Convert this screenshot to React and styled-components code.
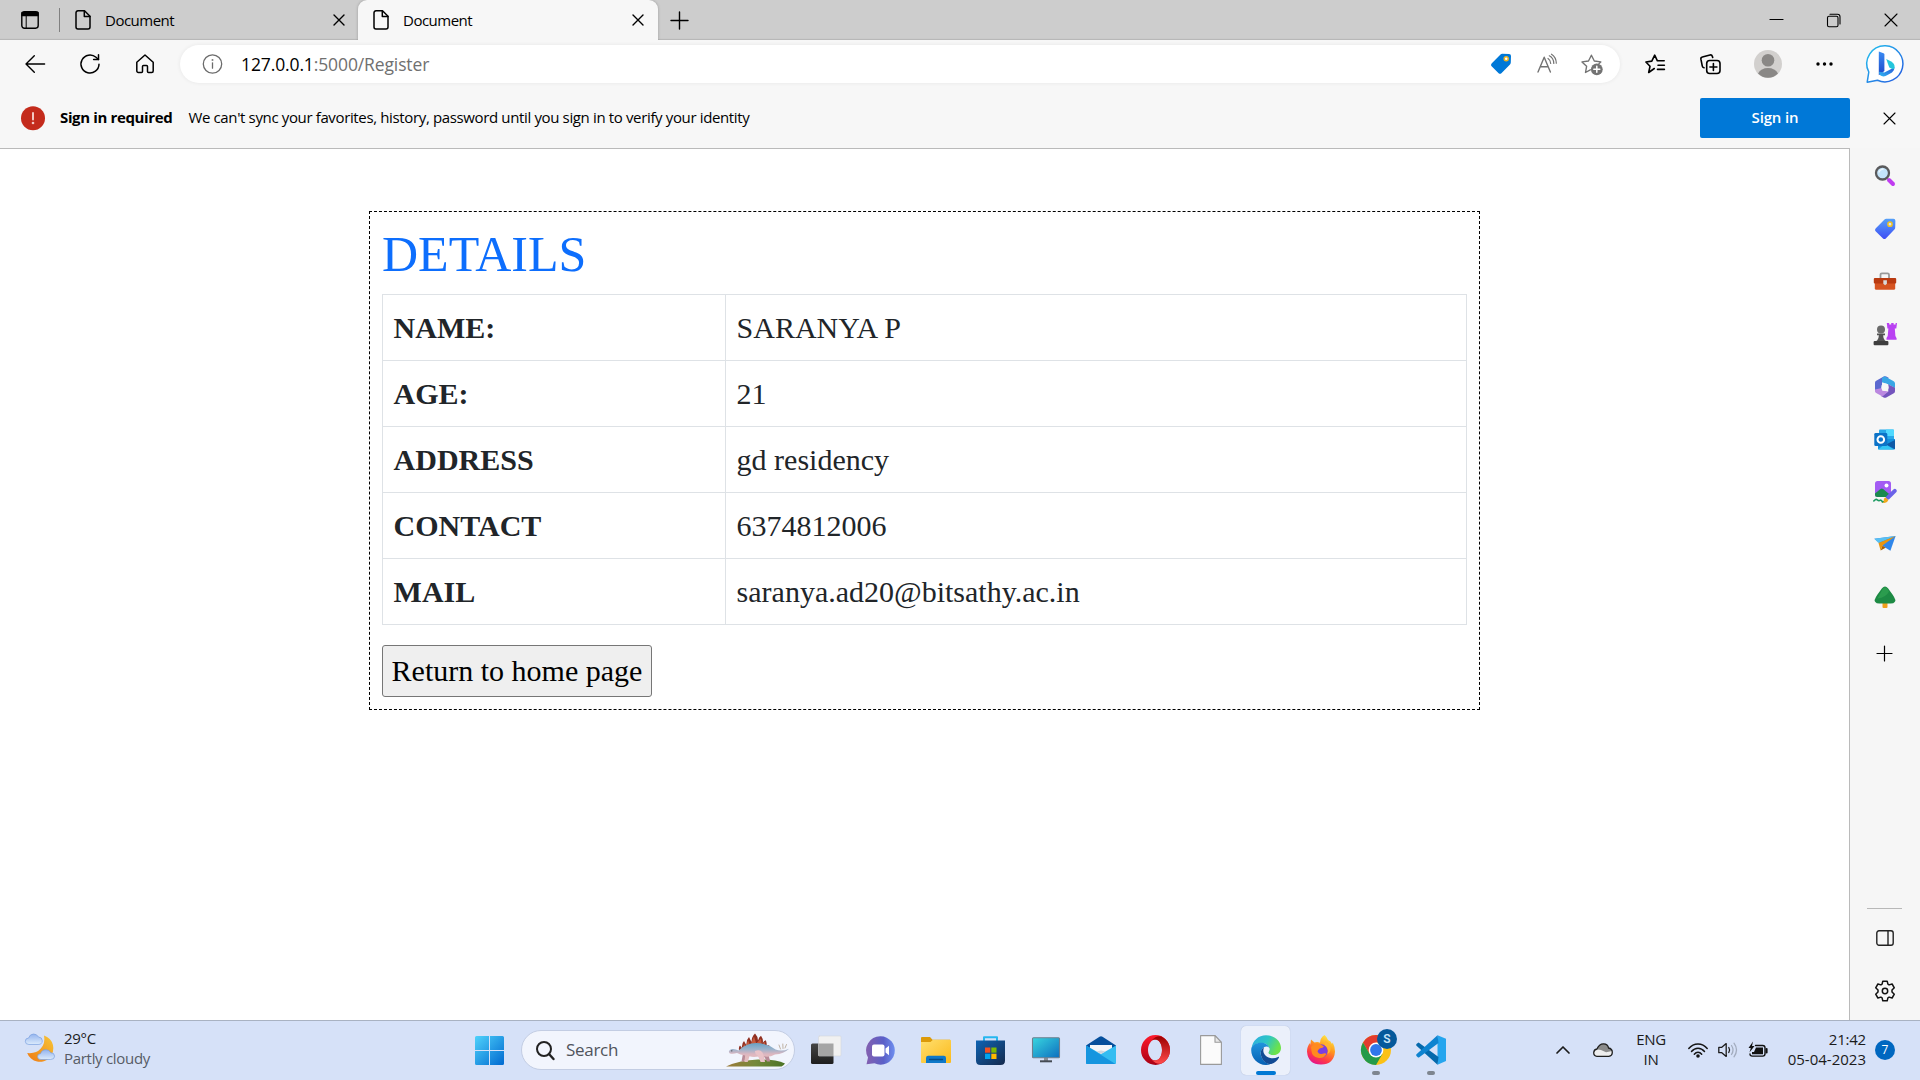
import React from "react";
import styled, { createGlobalStyle, css } from "styled-components";

const ui = `"Segoe UI", "Open Sans", "Noto Sans", sans-serif`;
const serif = `"Times New Roman", "Liberation Serif", serif`;

const GlobalStyle = createGlobalStyle`
  *, *::before, *::after { box-sizing: border-box; }
  html, body { margin: 0; padding: 0; }
  body { background: #fff; overflow: hidden; }
`;

/* ---------- window ---------- */
const Window = styled.div`
  width: 1920px;
  height: 1080px;
  display: flex;
  flex-direction: column;
  overflow: hidden;
  background: #f7f7f7;
  font-family: ${ui};
  color: #000;
`;

const Label = styled.span`
  font-size: ${(p) => p.$size || 15}px;
  font-weight: ${(p) => p.$weight || 400};
  letter-spacing: ${(p) => p.$track || 0}px;
  color: ${(p) => p.$color || "#000"};
  line-height: 20px;
  white-space: nowrap;
`;

const Slot = styled.span`
  display: flex;
  align-items: center;
  justify-content: ${(p) => p.$justify || "center"};
  flex: none;
  width: ${(p) => p.$w}px;
  height: ${(p) => p.$h || 40}px;
`;

const Drawing = styled.svg`
  display: block;
  flex: none;
  overflow: visible;
`;

function Icon({ w = 20, h = 20, stroke = "#000", sw = 1.4, children }) {
  return (
    <Drawing
      width={w}
      height={h}
      viewBox={`0 0 ${w} ${h}`}
      fill="none"
      stroke={stroke}
      strokeWidth={sw}
      strokeLinecap="round"
      strokeLinejoin="round"
    >
      {children}
    </Drawing>
  );
}

/* ---------- tab strip ---------- */
const TabStrip = styled.header`
  display: flex;
  align-items: stretch;
  height: 40px;
  background: #cdcdcd;
  box-shadow: inset 0 -2px 1px -1px #b6b6b6;
`;

const TabActions = styled.div`
  display: flex;
  align-items: center;
  width: 60px;
  padding-left: 21px;
  gap: 20px;
`;

const Divider = styled.span`
  width: 1px;
  height: 24px;
  background: #808080;
`;

const Tab = styled.div`
  display: flex;
  align-items: center;
  width: ${(p) => p.$w}px;
  padding: 0 ${(p) => p.$right}px 0 15px;
  ${(p) =>
    p.$active &&
    css`
      background: #f7f7f7;
      border-radius: 9px 9px 0 0;
      box-shadow: 0 0 3px rgba(0, 0, 0, 0.25);
      clip-path: inset(0 -4px 0 -4px);
    `}
`;

const TabTitle = styled(Label)`
  flex: 1;
  margin-left: 14px;
  padding-bottom: 1px;
`;

const WindowControls = styled.div`
  display: flex;
  align-items: center;
  margin-left: auto;
`;

/* ---------- toolbar ---------- */
const Toolbar = styled.nav`
  display: flex;
  align-items: center;
  height: 48px;
  padding-left: 7px;
`;

const AddressBar = styled.div`
  display: flex;
  align-items: center;
  width: 1440px;
  height: 38px;
  margin: 0 6px 0 8px;
  padding: 0 6px 0 22px;
  border-radius: 19px;
  background: #fff;
  box-shadow: 0 0 4px rgba(0, 0, 0, 0.07);
`;

const Url = styled.div`
  flex: 1;
  margin-left: 19px;
  padding-bottom: 1px;
  display: flex;
`;

/* ---------- sign in banner ---------- */
const Banner = styled.section`
  display: flex;
  align-items: center;
  height: 60px;
  padding-left: 20px;
`;

const BannerText = styled.div`
  display: flex;
  flex: 1;
  gap: 16px;
  margin-left: 15px;
  padding-bottom: 2px;
`;

const SignIn = styled.button`
  width: 150px;
  height: 40px;
  margin-right: 5px;
  padding: 0 0 2px;
  border: 0;
  border-radius: 2px;
  background: #0078d7;
  color: #fff;
  font: 600 15px ${ui};
  letter-spacing: -0.15px;
`;

const Dismiss = styled.span`
  display: flex;
  width: 65px;
  padding-left: 29px;
`;

/* ---------- page ---------- */
const Body = styled.main`
  display: flex;
  height: 872px;
`;

const Page = styled.div`
  width: 1850px;
  border-top: 1px solid #bababa;
  border-right: 1px solid #bababa;
  background: #fff;
  font-family: ${serif};
  color: #212529;
`;

const Panel = styled.section`
  width: 1111px;
  margin: 62px auto 0;
  padding: 12px;
  border: 1px dashed #000;
`;

const Title = styled.h1`
  margin: 0 0 10px;
  font-size: 50px;
  font-weight: 400;
  line-height: 60px;
  color: #0d6efd;
`;

const Table = styled.table`
  width: 100%;
  margin-bottom: 20px;
  border-collapse: collapse;
  table-layout: fixed;
  font-size: 30px;
  line-height: 45px;
  text-align: left;

  th,
  td {
    padding: 10px 10px 10px 10.6px;
    border: 1px solid #dee2e6;
  }
  th {
    width: 343px;
  }
`;

const HomeButton = styled.button`
  display: block;
  width: 270px;
  height: 52px;
  padding: 0;
  border: 1px solid #767676;
  border-radius: 3px;
  background: #efefef;
  color: #000;
  font: 30px ${serif};
  white-space: nowrap;
`;

const Sidebar = styled.aside`
  display: flex;
  flex-direction: column;
  align-items: center;
  width: 70px;
  padding: 2px 1px 3px 0;
  background: #f6f6f6;
`;

const SideItem = styled.span`
  display: flex;
  align-items: center;
  justify-content: center;
  height: ${(p) => p.$h || 52.6}px;
`;

const SideRule = styled.span`
  width: 35px;
  height: 1px;
  margin-top: auto;
  margin-bottom: 3px;
  background: #b8b8b8;
`;

/* ---------- taskbar ---------- */
const Taskbar = styled.footer`
  display: flex;
  align-items: center;
  height: 60px;
  padding-bottom: 1px;
  border-top: 1px solid #a9b2c2;
  background: #d6e1f8;
`;

const Weather = styled.div`
  display: flex;
  align-items: center;
  width: 462px;
  margin-top: -4px;
  padding-left: 25px;
  gap: 9px;
`;

const Lines = styled.div`
  display: flex;
  flex-direction: column;
  align-items: ${(p) => p.$align || "flex-start"};
  margin-top: ${(p) => p.$top || 0}px;
`;

const SearchBox = styled.div`
  display: flex;
  align-items: center;
  width: 274px;
  height: 40px;
  margin: 0 3px 0 4px;
  padding: 0 4px 0 14px;
  border: 1px solid #c3cde3;
  border-radius: 20px;
  background: #f2f5fd;
`;

const SearchLabel = styled(Label)`
  flex: 1;
  margin-left: 12px;
`;

const AppTile = styled.div`
  position: relative;
  display: flex;
  align-items: center;
  justify-content: center;
  width: 49px;
  height: 49px;
  margin: 0 3px;
  border-radius: 5px;
  ${(p) =>
    p.$active &&
    css`
      background: #ebf0fb;
      box-shadow: 0 0 1px #9fabc5;
    `}
  ${(p) =>
    p.$run &&
    css`
      &::after {
        content: "";
        position: absolute;
        bottom: 0;
        width: ${p.$active ? 20 : 8}px;
        height: 4px;
        border-radius: 2px;
        background: ${p.$active ? "#0078d4" : "#7e858f"};
      }
    `}
`;

const AccountBadge = styled.span`
  position: absolute;
  left: 26px;
  top: 3px;
  width: 20px;
  height: 20px;
  border-radius: 50%;
  background: #05599b;
  color: #c7e3f8;
  font: 600 12px/20px "Roboto", sans-serif;
  text-align: center;
`;

const Tray = styled.div`
  display: flex;
  align-items: center;
  margin-left: auto;
  padding-right: 25px;
`;

const Count = styled.span`
  width: 20px;
  height: 20px;
  margin-left: 9px;
  border-radius: 50%;
  background: #0067c0;
  color: #fff;
  font-size: 12px;
  line-height: 19px;
  text-align: center;
`;

/* ---------- line icons ---------- */
const Cross = ({ s = 10, c = "#000", sw = 1.4 }) => (
  <Icon w={s} h={s} stroke={c} sw={sw}>
    <path d={`M0 0L${s} ${s}M${s} 0L0 ${s}`} />
  </Icon>
);

const Plus = ({ s = 16, sw = 1.4 }) => (
  <Icon w={s} h={s} sw={sw}>
    <path d={`M${s / 2} 0V${s}M0 ${s / 2}H${s}`} />
  </Icon>
);

const PageGlyph = () => (
  <Icon w={16} h={20} sw={1.5}>
    <path d="M3 .8H9.5L15 6.2V17a2 2 0 0 1-2 2H3a2 2 0 0 1-2-2V2.8a2 2 0 0 1 2-2z" />
    <path d="M9.3 1V6.4H15" />
  </Icon>
);

const Workspaces = () => (
  <Icon w={18} h={18} sw={1.4}>
    <rect x=".8" y=".8" width="16.4" height="16.4" rx="2.6" />
    <path d="M1 1.5h16V4.600H1z" fill="#000" />
    <path d="M5.2 5v12" strokeWidth="1" />
  </Icon>
);

const Back = () => (
  <Icon w={20} h={18} sw={1.4}>
    <path d="M9.3 .8L1 9l8.3 8.2M1 9h18.600" />
  </Icon>
);

const Reload = () => (
  <Icon sw={1.5}>
    <path d="M19 10.2A9 9 0 1 1 16 3.300L18.500 5.500" />
    <path d="M18.500 .8V5.500H13.600" />
  </Icon>
);

const Home = () => (
  <Icon sw={1.5}>
    <path d="M1.8 8.3L10 1l8.2 7.300V17a1.500 1.500 0 0 1-1.500 1.500H13.500a1 1 0 0 1-1-1V12.500a1 1 0 0 0-1-1h-3a1 1 0 0 0-1 1v5a1 1 0 0 1-1 1H3.300A1.500 1.500 0 0 1 1.800 17z" />
  </Icon>
);

const Info = () => (
  <Icon stroke="#6b6b6b" sw={1.3}>
    <circle cx="10.500" cy="10" r="9.200" />
    <path d="M10.500 8.800v5.400" />
    <circle cx="10.500" cy="6" r=".3" />
  </Icon>
);

const Tag = () => (
  <Icon w={22} h={22} stroke="none">
    <path d="M10.500 1.500Q11.200.8 12.200.8L19 .9q2 .1 2 2l-.2 6.700q0 1-.8 1.800l-8.600 8.800q-1.400 1.300-2.800 0l-7-7q-1.300-1.400 0-2.800z" fill="#0078d7" />
    <circle cx="16.200" cy="5.800" r="2" fill="#fff" stroke="#eeb422" strokeWidth="1.500" />
  </Icon>
);

const ReadAloud = () => (
  <Icon w={20} h={20} stroke="#737373" sw={1.4}>
    <path d="M1 18L7.200 3.200 13.400 18M3.300 12.800h7.900" />
    <path d="M11 4.500q2.600 1.600 2.700 5M12.300 1.800q4.300 2 4.500 7.700M14.500 .2q4.600 2.800 4.800 9" strokeWidth="1.200" />
  </Icon>
);

const AddFavorite = () => (
  <Icon w={22} h={21} stroke="#737373" sw={1.4}>
    <path d="M9.300 15.800l-4.800 2.700 1.100-6.200L1 7.900l6.500-.9 2.900-5.800 2.900 5.800 6.500.9-1.800 1.700" />
    <circle cx="15.800" cy="15.300" r="5.900" fill="#737373" stroke="none" />
    <path d="M15.800 12.300v6M12.800 15.300h6" stroke="#fff" strokeWidth="1.500" />
  </Icon>
);

const Favorites = () => (
  <Icon w={20} h={20} sw={1.6}>
    <path d="M9.300 14.500l-5.600 4L5 12.300 .9 8l5.900-.9L9.700 1.200l2.700 5.600h6.800M13 11.200h6.400M12.500 15.400h6.900" />
  </Icon>
);

const Collections = () => (
  <Icon w={21} h={21} sw={1.6}>
    <path d="M4 13.800q-1.400-.3-1.700-1.700L.9 5.200Q.6 3.400 2.300 3L10 1q1.800-.4 2.400 1.500l.3 1" />
    <rect x="6.700" y="6.500" width="13.300" height="13" rx="3" />
    <path d="M13.400 9.500v7M9.900 13h7" />
  </Icon>
);

const Avatar = () => (
  <Icon w={28} h={28} stroke="none">
    <circle cx="14" cy="14" r="14" fill="#d2d0ce" />
    <circle cx="14" cy="10.200" r="6.300" fill="#8a8886" />
    <path d="M4 23.500q3-5.500 10-5.500t10 5.500A14 14 0 0 1 4 23.500z" fill="#8a8886" />
  </Icon>
);

const Dots = () => (
  <Icon w={17} h={4} stroke="none">
    <circle cx="2" cy="2" r="1.700" fill="#000" />
    <circle cx="8.500" cy="2" r="1.700" fill="#000" />
    <circle cx="15" cy="2" r="1.700" fill="#000" />
  </Icon>
);

const Bing = () => (
  <Icon w={38} h={38} stroke="none">
    <defs>
      <linearGradient id="bo" x1="0" y1="0" x2="1" y2="1">
        <stop offset="0" stopColor="#25c3ee" />
        <stop offset="1" stopColor="#2457e0" />
      </linearGradient>
      <linearGradient id="bs" x1="0" y1="0" x2="0" y2="1">
        <stop offset="0" stopColor="#3a8cf4" />
        <stop offset="1" stopColor="#1c48c8" />
      </linearGradient>
      <linearGradient id="bb" x1="0" y1="1" x2="1" y2="0">
        <stop offset="0" stopColor="#2fb8f2" />
        <stop offset="1" stopColor="#2a55d8" />
      </linearGradient>
    </defs>
    <path d="M19.500 .8A18 18 0 1 1 11.500 35.200L1.200 37.200 2.800 27A18 18 0 0 1 19.500 .8z" fill="#fff" stroke="url(#bo)" strokeWidth="1.500" />
    <path d="M12.800 6.500l4.700 1.700q.9.400.9 1.400V26l-5.600 4.200z" fill="url(#bs)" />
    <path d="M12.800 26.800q.5 4.500 4.700 4.600 2 0 4-1.300l4.500-2.700q2.600-2 2.600-5.200l-10.200 5.200-3-.5z" fill="url(#bb)" />
    <path d="M20.200 14l5 2.500q3.700 2 3.400 6-.3 1.200-1.300 2l-4-2z" fill="#24c6dc" />
  </Icon>
);

const Alert = () => (
  <Icon w={25} h={25} stroke="none">
    <circle cx="13" cy="12.300" r="12" fill="#c42b1c" />
    <path d="M13 7v6.500" stroke="#f3c9c4" strokeWidth="2" />
    <circle cx="13" cy="17" r="1.300" fill="#f3c9c4" />
  </Icon>
);

/* ---------- sidebar icons ---------- */
const SideSearch = () => (
  <Icon w={22} h={22} stroke="none">
    <path d="M15 15l4 4" stroke="#c03cf0" strokeWidth="4" />
    <circle cx="8.500" cy="8" r="6.500" fill="#c4e4fa" stroke="#5a5a5c" strokeWidth="2.300" />
    <path d="M5 7Q6 4.500 9 4.200" stroke="#eef8ff" strokeWidth="1.300" />
  </Icon>
);

const SideTag = () => (
  <Icon w={22} h={22} stroke="none">
    <defs>
      <linearGradient id="tg" x1="0" y1="0" x2="0" y2="1">
        <stop offset="0" stopColor="#55a0f8" />
        <stop offset="1" stopColor="#3f4df5" />
      </linearGradient>
    </defs>
    <path d="M10.500 1.500Q11.200.8 12.200.8L19.500.8q1.900.1 1.900 2l-.2 7q0 1-.8 1.800l-8.600 8.800q-1.400 1.300-2.800 0l-7.400-7.200q-1.300-1.400 0-2.800z" fill="url(#tg)" />
    <circle cx="16" cy="6.200" r="2.100" fill="#d8e4f4" stroke="#f2c21d" strokeWidth="1.500" />
  </Icon>
);

const Toolbox = () => (
  <Icon w={24} h={18} stroke="none">
    <path d="M7.500 6V2.800Q7.500 1.300 9 1.300h5.500Q16 1.300 16 2.800V6" stroke="#999" strokeWidth="1.800" />
    <rect x="1.800" y="7" width="20.400" height="10.800" rx="1.500" fill="#d65320" />
    <rect x=".8" y="6" width="22.400" height="5.500" rx="1" fill="#b93a10" />
    <path d="M10.300 8.200h3.600v3.600l-1.800 1.500-1.800-1.500z" fill="#d9d9d9" />
  </Icon>
);

const Games = () => (
  <Icon w={24} h={24} stroke="none">
    <path d="M13.800 1h2.400v1.600h2V1h2.400v1.600h2V1H24l-.7 5.500h-1.500l.6 7.500 1.200 2.300v1.500H13.500V16l1.200-2 .7-7.500h-1z" fill="#b941f2" />
    <circle cx="8" cy="7.500" r="4" fill="#6b6b6b" />
    <path d="M4 11.500h8v1.800h-1.800q0 4 2.800 6H3q2.800-2 2.800-6H4z" fill="#545454" />
    <rect x=".6" y="19" width="14.800" height="4.200" rx="1" fill="#3e3e3e" />
  </Icon>
);

const M365 = () => (
  <Icon w={22} h={22} stroke="none">
    <path d="M9.700.6q1.300-.8 2.600 0L15 2 8 6.300v8L4.500 17 1 15V6.800q0-1.300 1.200-2z" fill="#5a68cf" />
    <path d="M10.500.3l8.800 4.700q1.700.9 1.700 2.500V12L14 8.300 8 6.300V2z" fill="#39a6e5" />
    <path d="M14 8.300l7 3.500v3.500q0 1.300-1.200 2l-7.500 4.200q-1.300.7-2.600 0L7 20l7.300-4.500z" fill="#7455bd" />
    <path d="M1 13.500l7-1.500 0 2.500 6.300 1L8.500 20.600 2.200 17Q1 16.300 1 15z" fill="#bb88e0" />
    <circle cx="11" cy="11.300" r="3.700" fill="#f6f6f6" />
  </Icon>
);

const Outlook = () => (
  <Icon w={22} h={21} stroke="none">
    <rect x="5" y=".5" width="15" height="12" rx="1" fill="#28a8e8" />
    <path d="M12 .5h7a1 1 0 0 1 1 1V7h-8z" fill="#50d9ff" />
    <path d="M4 10h17v9.500a1 1 0 0 1-1 1H5a1 1 0 0 1-1-1z" fill="#1490df" />
    <path d="M21 11v9.200L12 15.500z" fill="#0f5aa7" />
    <path d="M4 20.500h16L11 15z" fill="#32c5f4" />
    <rect x=".3" y="4" width="13" height="13" rx="1.300" fill="#0c73c7" />
    <circle cx="6.800" cy="10.500" r="3.300" stroke="#fff" strokeWidth="2" />
  </Icon>
);

const ImageCreator = () => (
  <Icon w={24} h={24} stroke="none">
    <rect x="2" y="1" width="16" height="16" rx="2.500" fill="#a35cf3" />
    <circle cx="13.500" cy="5.500" r="2" fill="#fff" />
    <path d="M2 13.500l5.500-4.600q1.300-1 2.600 0L18 15.500q-.5 1.500-2.500 1.500h-11Q2 17 2 14.500z" fill="#1b8a4e" />
    <path d="M.8 21q2-2.500 3.500-1.200T7 20.300t2.500 1.800l2-.6" stroke="#1b9a60" strokeWidth="1.600" />
    <path d="M15 17.500l6.800-6.600" stroke="#6a62e8" strokeWidth="4" />
    <path d="M12.300 17.200l3 2.700q-1 3.300-5.800 3 1.800-1 1.200-3 .2-1.700 1.600-2.700z" fill="#f2a91b" />
  </Icon>
);

const Drop = () => (
  <Icon w={22} h={18} stroke="none">
    <path d="M.3 3.800L21.600 1l-5.200 14.800-5.300-3.300z" fill="#2f86ea" />
    <path d="M.3 3.800L21.600 1 4.500 8z" fill="#58c0f2" />
    <path d="M4.500 8L21.600 1 8.500 10.500 6.600 15.500z" fill="#e9960f" />
    <path d="M6.600 15.500l2-5 3 2.200z" fill="#a45f06" />
  </Icon>
);

const Tree = () => (
  <Icon w={22} h={23} stroke="none">
    <rect x="8.500" y="15" width="5" height="7" rx="1" fill="#f0a01c" />
    <path d="M8 2.200q3-3.200 6 0l4.700 6.500q4 6 2 7.300-1 1.500-4 1.500H5.300q-3 0-4-1.500-2-1.300 2-7.300z" fill="#1d8a44" />
    <path d="M9 2.500q2-2 4 0l2 3q-3 6-11.500 7z" fill="#35a955" opacity=".6" />
  </Icon>
);

const PanelGlyph = () => (
  <Icon w={18} h={16} stroke="#222" sw={1.4}>
    <rect x=".8" y=".8" width="16.400" height="14.400" rx="2.200" />
    <path d="M12 .8v14.400" />
  </Icon>
);

const Gear = () => (
  <Icon w={22} h={22} stroke="#111" sw={1.5}>
    <path d="M8.800 1.200h4.400l.7 3 1.200.7 3-.9 2.200 3.800-2.300 2.200v2l2.300 2.200-2.200 3.800-3-.9-1.200.7-.7 3H8.800l-.7-3-1.200-.7-3 .9-2.200-3.800L4 12v-2L1.700 7.800 3.900 4l3 .9 1.200-.7z" />
    <circle cx="11" cy="11" r="2.700" />
  </Icon>
);

/* ---------- taskbar icons ---------- */
const WeatherIcon = () => (
  <Icon w={30} h={30} stroke="none">
    <defs>
      <linearGradient id="mo" x1="0" y1="1" x2="1" y2="0">
        <stop offset="0" stopColor="#ee7a14" />
        <stop offset="1" stopColor="#f7c738" />
      </linearGradient>
      <linearGradient id="cl" x1="0" y1="0" x2="0" y2="1">
        <stop offset="0" stopColor="#94b4ee" />
        <stop offset="1" stopColor="#dcebfc" />
      </linearGradient>
    </defs>
    <path d="M19 2.500a13.500 13.500 0 1 1-16.800 17.500Q11 21 15.800 15.500T19 2.500z" fill="url(#mo)" />
    <path d="M3.500 11.500a3.200 3.200 0 0 1 0-6.400Q5 1 8.500 1q3.300 0 5 3 3.800.2 3.800 3.800 0 3.700-3.800 3.700z" fill="url(#cl)" stroke="#7ba0e0" strokeWidth=".7" />
    <path d="M15.500 26.500a2.900 2.900 0 0 1 0-5.800Q17 16.500 21 16.700q3.400.1 4.600 3 3.900 0 4 3.500-.1 3.300-3.600 3.300z" fill="url(#cl)" stroke="#7ba0e0" strokeWidth=".7" />
  </Icon>
);

const Start = () => (
  <Icon w={29} h={29} stroke="none">
    <defs>
      <linearGradient id="wn" x1="0" y1="0" x2="29" y2="29" gradientUnits="userSpaceOnUse">
        <stop offset="0" stopColor="#4fd2fb" />
        <stop offset="1" stopColor="#0069d0" />
      </linearGradient>
    </defs>
    <path d="M1.500 0H14v14H0V1.500Q0 0 1.500 0zM15 0h12.500Q29 0 29 1.500V14H15zM0 15h14v14H1.500Q0 29 0 27.500zM15 15h14v12.500q0 1.500-1.500 1.500H15z" fill="url(#wn)" />
  </Icon>
);

const Magnifier = () => (
  <Icon w={18} h={19} stroke="#222" sw={2}>
    <circle cx="8" cy="8" r="7" />
    <path d="M13 13l4.500 5" strokeWidth="2.400" />
  </Icon>
);

const Dino = () => (
  <Icon w={64} h={34} stroke="none">
    <defs>
      <linearGradient id="di" x1="0" y1="9" x2="0" y2="24" gradientUnits="userSpaceOnUse">
        <stop offset="0" stopColor="#5f9fc2" />
        <stop offset=".5" stopColor="#9db3cb" />
        <stop offset=".8" stopColor="#dcb6c0" />
        <stop offset="1" stopColor="#e3bcbf" />
      </linearGradient>
      <linearGradient id="gr" x1="0" y1="0" x2="1" y2="0">
        <stop offset="0" stopColor="#9c7a3a" />
        <stop offset=".5" stopColor="#75893a" />
        <stop offset="1" stopColor="#4b7325" />
      </linearGradient>
    </defs>
    <path d="M0 33.500Q14 27 32 26.500t27 4q-1.500 2-3.500 3z" fill="url(#gr)" />
    <path d="M13 17q-.5-3 1-4.500l2 2.500q-.5-4.500 2-7l2.500 4.500q-.5-5.500 2.500-8.500l2.500 5q0-5.500 3.500-8.500 3 3 3 7 1-3.500 3-4.800 2.500 3.500 1.800 7.300 1-2 3-2.800 1.500 3.500.5 6 1.500-1 3-.8.3 3-1.500 5z" fill="#8f2f20" />
    <path d="M17 16l1-5.500 1.800 4L22 7l2.200 5.500L28 3.500l2.200 7L35 5.500l.8 6.500 3.500-3.500-.5 6 3.500-1.500-1 3z" fill="#c65a3c" />
    <path d="M17 20.500l-1.500 8h3l1.500-6zM36 20l5 8.500h3.200L42 20z" fill="#b98b97" />
    <path d="M2.800 18.800Q3.200 16.500 6 16q3.500-.3 6.500 1.500Q20 10 30 10t19.500 6.500q6.500 2.500 13.500-.8-5 5-14 5.800-4 2.200-8 2.200l-3-.5 1 5.800h-4l-2-5.500q-6 1-9.500-.2l-1.800 5.700h-3.300l.8-6.500Q14 21.800 11 20q-4.500 1.500-7.500.2z" fill="url(#di)" />
    <path d="M29 18q5-2 7.500 1.500 1.500 3 1 5l1 4.500h-3.800l-3-6.500Q28.500 21 29 18z" fill="#e9c3c8" />
    <path d="M54.500 16l-1.500-4M57 15.500l-.2-4.500M59 15l1.500-3.500" stroke="#b9aa98" strokeWidth=".9" />
    <circle cx="5.800" cy="17.800" r=".6" fill="#333" />
  </Icon>
);

const TaskView = () => (
  <Icon w={30} h={28} stroke="none">
    <defs>
      <linearGradient id="tv" x1="0" y1="0" x2="0" y2="1">
        <stop offset="0" stopColor="#454545" />
        <stop offset="1" stopColor="#1e1e1e" />
      </linearGradient>
    </defs>
    <rect x="0" y="7.500" width="22.500" height="20.500" rx="1.500" fill="url(#tv)" />
    <rect x="7.500" y="0" width="22.500" height="20" rx="1" fill="#f1f1f1" stroke="#d5d7db" strokeWidth=".6" />
    <path d="M7.500 7.500h15V20h-15z" fill="#a5a5a5" />
  </Icon>
);

const Chat = () => (
  <Icon w={29} h={29} stroke="none">
    <defs>
      <linearGradient id="ch" x1="0" y1="0" x2="1" y2="0">
        <stop offset="0" stopColor="#8360b0" />
        <stop offset=".6" stopColor="#5b5fc7" />
        <stop offset="1" stopColor="#6e8ff0" />
      </linearGradient>
    </defs>
    <path d="M14.500.3a14.200 14.200 0 1 1-6 27L.5 28.300 2 21.500A14.200 14.200 0 0 1 14.500.3z" fill="url(#ch)" />
    <rect x="6" y="8.500" width="12.500" height="12" rx="2" fill="#fff" />
    <path d="M19.500 12.500l3.500-2.700v9.400l-3.500-2.700z" fill="#fff" />
  </Icon>
);

const Explorer = () => (
  <Icon w={30} h={28} stroke="none">
    <defs>
      <linearGradient id="fo" x1="0" y1="0" x2="1" y2="1">
        <stop offset="0" stopColor="#ffdf6e" />
        <stop offset="1" stopColor="#fbba1c" />
      </linearGradient>
    </defs>
    <path d="M0 8V2q0-1 1-1h8l2.500 2.700H29V9H0z" fill="#dc9a09" />
    <path d="M0 6h9.500l2.500-2.200h17q1 0 1 1V26q0 1-1 1H1q-1 0-1-1z" fill="url(#fo)" />
    <path d="M5 27v-5q0-2.200 2.200-2.200h15.600q2.200 0 2.200 2.200v5z" fill="#0e78c9" />
    <path d="M8.500 23.500h13" stroke="#064b86" strokeWidth="1.300" />
  </Icon>
);

const Store = () => (
  <Icon w={29} h={29} stroke="none">
    <defs>
      <linearGradient id="so" x1="0" y1="0" x2="1" y2="1">
        <stop offset="0" stopColor="#0e63b4" />
        <stop offset="1" stopColor="#15294c" />
      </linearGradient>
    </defs>
    <path d="M8 5V1.300h13V5" stroke="#27b7ef" strokeWidth="2" />
    <path d="M0 4.500h29V24.500q0 4.500-4.500 4.500h-20Q0 29 0 24.500z" fill="url(#so)" />
    <path d="M9 11.500h5.300v5.200H9z" fill="#f25022" />
    <path d="M15.300 11.500h5.200v5.200h-5.200z" fill="#7fba00" />
    <path d="M9 17.700h5.300V23H9z" fill="#00a4ef" />
    <path d="M15.300 17.700h5.200V23h-5.200z" fill="#ffb900" />
  </Icon>
);

const Monitor = () => (
  <Icon w={28} h={26} stroke="none">
    <defs>
      <linearGradient id="mn" x1="0" y1="0" x2="1" y2="1">
        <stop offset="0" stopColor="#38d6df" />
        <stop offset="1" stopColor="#0d6ebf" />
      </linearGradient>
    </defs>
    <path d="M12 20h4v4h-4z" fill="#8a8f96" />
    <path d="M8 23.300h12v2H8z" fill="#454b54" />
    <rect x=".5" y=".8" width="27" height="20" rx="1" fill="url(#mn)" stroke="#6f7f8e" strokeWidth="1.100" />
  </Icon>
);

const Mail = () => (
  <Icon w={30} h={28} stroke="none">
    <path d="M0 9.500L13.500.7q1.500-1 3 0L30 9.500V15H0z" fill="#064f9c" />
    <path d="M4 9h22v9H4z" fill="#f4f6f9" />
    <path d="M0 9.500l15 8.500 15-8.500V27q0 1-1 1H1q-1 0-1-1z" fill="#35bdf1" />
    <path d="M0 9.500L29.500 28H1q-1 0-1-1z" fill="#1695df" />
    <path d="M10.500 15.500l4.500 2.600 4.500-2.600-4.500-1z" fill="#cfd6df" />
  </Icon>
);

const Opera = () => (
  <Icon w={29} h={30} stroke="none">
    <defs>
      <linearGradient id="op" x1="0" y1="0" x2="0" y2="1">
        <stop offset="0" stopColor="#ff1b2d" />
        <stop offset="1" stopColor="#a70014" />
      </linearGradient>
      <linearGradient id="oq" x1="0" y1="0" x2="0" y2="1">
        <stop offset="0" stopColor="#9c0000" />
        <stop offset="1" stopColor="#ff4b4b" />
      </linearGradient>
    </defs>
    <path fillRule="evenodd" d="M14.500 0a14.500 15 0 1 0 0 30 14.500 15 0 0 0 0-30zm0 4.500c4.200 0 6.500 5 6.500 10.500s-2.300 10.500-6.500 10.500S7 20.500 7 15s3.300-10.500 7.500-10.500z" fill="url(#op)" />
    <path d="M10.500 5.500Q15 .3 20.500 1.500 29 6 29 15t-8.500 13.500q-5.500 1.200-10-4Q14 26.700 17.800 24 21 20.500 21 15t-3.200-9Q14 3.300 10.500 5.500z" fill="url(#oq)" />
  </Icon>
);

const BlankFile = () => (
  <Icon w={22} h={30} stroke="#9a9a9a" sw={1.1}>
    <path d="M.6.6H15L21.400 7.300V29.400H.6z" fill="#fbfbfb" />
    <path d="M15 .6V7.300H21.400z" fill="#e8e8e8" />
  </Icon>
);

const Edge = () => (
  <Icon w={30} h={30} stroke="none">
    <defs>
      <linearGradient id="e1" x1="0" y1="0" x2="1" y2=".4">
        <stop offset="0" stopColor="#2fa9e6" />
        <stop offset=".55" stopColor="#2cc6c5" />
        <stop offset="1" stopColor="#6ce24a" />
      </linearGradient>
      <linearGradient id="e2" x1="0" y1="0" x2="0" y2="1">
        <stop offset="0" stopColor="#2093dc" />
        <stop offset="1" stopColor="#0660b4" />
      </linearGradient>
    </defs>
    <path d="M.5 13.500C1.500 5.500 7.500.2 15 .2 23.500.2 30 6 30 13c0 4.500-3.500 7.200-7.500 7.200-3.300 0-5.200-1.200-5.200-2.400 0-.9 1.200-1.300 1.200-3.500C18.500 11 15 8 10.500 8 6 8 2 10 .5 13.500z" fill="url(#e1)" />
    <path d="M.2 15C.2 10.500 5 7.800 10 7.800c4 0 7.300 2 8.300 5-1.500-1.500-3.300-1.700-5-.8C10 14 9 17.500 10.300 21.500c1.300 4 4.500 6.800 9 7.700Q17.500 30 15 30C6.500 30 .2 23 .2 15z" fill="url(#e2)" />
    <path d="M13.200 12C10 13.800 9 17.500 10.300 21.500c1.800 5.200 6.200 8.200 10 7.500 3.500-1.300 6.200-3.600 7.600-6.300.4-.8-.3-1-.9-.7-4 2-9.400 1.500-12.300-1.300-2.700-2.500-3-6-1.500-8.700z" fill="#124b95" />
    <path d="M18.200 13c.7 3-1.200 3.700-1 5 .3 1.200 2 2.200 5.200 2.200 2 0 3.500-.5 5-1.500-4 3.800-9.500 3.700-12.200 1-2.500-2.500-2-6 .3-7.400z" fill="#ebf0fb" />
  </Icon>
);

const Firefox = () => (
  <Icon w={28} h={30} stroke="none">
    <defs>
      <linearGradient id="ff" x1=".8" y1="0" x2=".3" y2="1">
        <stop offset="0" stopColor="#fff04a" />
        <stop offset=".4" stopColor="#ff9a1c" />
        <stop offset=".75" stopColor="#ff3a46" />
        <stop offset="1" stopColor="#e4128c" />
      </linearGradient>
    </defs>
    <path d="M17.500 0q2.500 2 3.500 5 3 1 4 4l.8-1.500Q28 12 28 16.500 27 29.500 14 29.500T0 16.500q0-5 3-8.500l.3 2L4 4.500l3.500 3q3-1 5.500.2Q13 3 17.500 0z" fill="url(#ff)" />
    <circle cx="14" cy="16" r="6.700" fill="#7a3fe0" />
    <path d="M4 12q4-5 9-3l4 2.500q-1.500 2-4 1.800-2.500 1.700-2.500 3.200 1.500 3.500 5 2.300 2.500-1 4 0-2.500 5-8.500 4T4.500 16z" fill="#ff8a1f" />
    <path d="M18 10.500q4.500 3 2.500 8.500 4-2 3-7.500-1-4-5.500-6z" fill="#ffb52e" />
  </Icon>
);

const Chrome = () => (
  <Icon w={30} h={30} stroke="none">
    <circle cx="15" cy="15" r="15" fill="#fbc116" />
    <path d="M2 7.500A15 15 0 0 1 28 7.500H15v7.500L8.500 18.700z" fill="#e33b2e" />
    <path d="M2 7.500A15 15 0 0 0 15 30l6.500-11.300-13 0z" fill="#249a49" />
    <circle cx="15" cy="15" r="7.400" fill="#fff" />
    <circle cx="15" cy="15" r="5.900" fill="#2f77ea" />
  </Icon>
);

const VSCode = () => (
  <Icon w={30} h={30} stroke="none">
    <path d="M21.500.3L30 3.800V26L21.500 29.700z" fill="#25a5ee" />
    <path d="M21.500 29.700L.5 10.800q-.8-.8 0-1.700l1.300-1.200q.7-.6 1.500 0L22.500 22z" fill="#0569ac" />
    <path d="M21.500.3L.5 19.300q-.8.8 0 1.700l1.300 1.200q.7.6 1.500 0L22.500 8z" fill="#0e83d0" />
  </Icon>
);

const Chevron = () => (
  <Icon w={14} h={8} stroke="#1b1b1b" sw={1.7}>
    <path d="M1 7l6-6 6 6" />
  </Icon>
);

const CloudGlyph = () => (
  <Icon w={20} h={14} stroke="none">
    <path d="M4 13.300Q.7 13 .7 9.700.9 6.500 4 6 6 .8 10.500.8T15.500 5q3.800.7 3.800 4.300 0 3.700-3.500 4z" fill="#eee" />
    <path d="M3.500 6.300Q6 .8 10.500.8T15.500 5q3 .7 3.600 3l-6 1.200L8 7z" fill="#8b8b8b" />
    <path d="M4 13.300Q.7 13 .7 9.700.9 6.500 4 6 6 .8 10.500.8T15.500 5q3.800.7 3.800 4.300 0 3.700-3.500 4z" stroke="#1f1f1f" strokeWidth="1.300" />
  </Icon>
);

const Wifi = () => (
  <Icon w={20} h={15} stroke="#151515" sw={1.5}>
    <path d="M.8 5.500Q4.500 1 10 1t9.200 4.500M3.500 8.500Q6.200 5.200 10 5.200t6.500 3.300M6.300 11.200Q7.900 9.300 10 9.300t3.700 1.900" />
    <circle cx="10" cy="13" r="1.800" fill="#151515" stroke="none" />
  </Icon>
);

const Volume = () => (
  <Icon w={20} h={16} stroke="#1b1b1b" sw={1.3}>
    <path d="M.8 5.300h3L8.200 1.600v12.800L3.800 10.700h-3z" />
    <path d="M10.800 5.500q1.600 2.500 0 5" />
    <path d="M13.500 3.500q3 4.500 0 9M16 1.200q5 6.800 0 13.600" stroke="#a3acbe" />
  </Icon>
);

const Battery = () => (
  <Icon w={20} h={16} stroke="#111" sw={1.4}>
    <path d="M7.500 3.500H14.700q2.300 0 2.300 2.300v6q0 2.300-2.300 2.300H4.300Q2 14.100 2 12" />
    <path d="M8 5.500h7v6.800H4V10h2z" fill="#111" stroke="none" />
    <path d="M18.600 7v3.500" strokeWidth="2" />
    <path d="M5-.5L.5 6h2.300L1.500 10.500 6.500 4H4z" fill="#111" stroke="none" />
  </Icon>
);

const rows = [
  ["NAME:", "SARANYA P"],
  ["AGE:", "21"],
  ["ADDRESS", "gd residency"],
  ["CONTACT", "6374812006"],
  ["MAIL", "saranya.ad20@bitsathy.ac.in"],
];

const sideIcons = [SideSearch, SideTag, Toolbox, Games, M365, Outlook, ImageCreator, Drop, Tree];

const apps = [
  { Glyph: TaskView },
  { Glyph: Chat },
  { Glyph: Explorer },
  { Glyph: Store },
  { Glyph: Monitor },
  { Glyph: Mail },
  { Glyph: Opera },
  { Glyph: BlankFile },
  { Glyph: Edge, active: true, run: true },
  { Glyph: Firefox },
  { Glyph: Chrome, run: true, badge: "S" },
  { Glyph: VSCode, run: true },
];

export default function App() {
  return (
    <Window>
      <GlobalStyle />
      <TabStrip>
        <TabActions>
          <Workspaces />
          <Divider />
        </TabActions>
        <Tab $w={298} $right={14}>
          <PageGlyph />
          <TabTitle $track={-0.5}>Document</TabTitle>
          <Cross />
        </Tab>
        <Tab $w={300} $right={15} $active>
          <PageGlyph />
          <TabTitle $track={-0.5}>Document</TabTitle>
          <Cross />
        </Tab>
        <Slot $w={43}>
          <Plus s={17} />
        </Slot>
        <WindowControls>
          <Slot $w={57}>
            <Icon w={13} h={2} sw={1.2}>
              <path d="M0 .5h13" />
            </Icon>
          </Slot>
          <Slot $w={57}>
            <Icon w={13} h={13} sw={1.1}>
              <rect x=".5" y="2.200" width="10.500" height="10.500" rx="1.500" />
              <path d="M3 .3h7.500Q13 .3 13 2.700V10" />
            </Icon>
          </Slot>
          <Slot $w={58}>
            <Cross s={12} sw={1.1} />
          </Slot>
        </WindowControls>
      </TabStrip>

      <Toolbar>
        <Slot $w={55}><Back /></Slot>
        <Slot $w={55}><Reload /></Slot>
        <Slot $w={55}><Home /></Slot>
        <AddressBar>
          <Info />
          <Url>
            <Label $size={17.5} $track={-0.12}>127.0.0.1</Label>
            <Label $size={17.5} $track={-0.12} $color="#707070">:5000/Register</Label>
          </Url>
          <Slot $w={46}><Tag /></Slot>
          <Slot $w={45}><ReadAloud /></Slot>
          <Slot $w={45}><AddFavorite /></Slot>
        </AddressBar>
        <Slot $w={57}><Favorites /></Slot>
        <Slot $w={55}><Collections /></Slot>
        <Slot $w={59}><Avatar /></Slot>
        <Slot $w={55}><Dots /></Slot>
        <Slot $w={65}><Bing /></Slot>
      </Toolbar>

      <Banner>
        <Alert />
        <BannerText>
          <Label $weight={700} $track={-0.36}>Sign in required</Label>
          <Label $track={-0.36}>
            We can't sync your favorites, history, password until you sign in to verify your identity
          </Label>
        </BannerText>
        <SignIn>Sign in</SignIn>
        <Dismiss><Cross s={11} sw={1.1} /></Dismiss>
      </Banner>

      <Body>
        <Page>
          <Panel>
            <Title>DETAILS</Title>
            <Table>
              <tbody>
                {rows.map(([k, v]) => (
                  <tr key={k}>
                    <th>{k}</th>
                    <td>{v}</td>
                  </tr>
                ))}
              </tbody>
            </Table>
            <HomeButton>Return to home page</HomeButton>
          </Panel>
        </Page>
        <Sidebar>
          {sideIcons.map((Glyph, i) => (
            <SideItem key={i}>
              <Glyph />
            </SideItem>
          ))}
          <SideItem $h={60}>
            <Plus s={15} sw={1.2} />
          </SideItem>
          <SideRule />
          <SideItem>
            <PanelGlyph />
          </SideItem>
          <SideItem>
            <Gear />
          </SideItem>
        </Sidebar>
      </Body>

      <Taskbar>
        <Weather>
          <WeatherIcon />
          <Lines>
            <Label $track={-0.3} $color="#1b1b1b">29°C</Label>
            <Label $track={-0.3} $color="#575c66">Partly cloudy</Label>
          </Lines>
        </Weather>
        <Slot $w={55}><Start /></Slot>
        <SearchBox>
          <Magnifier />
          <SearchLabel $size={17} $track={-0.3} $color="#50545c">Search</SearchLabel>
          <Dino />
        </SearchBox>
        {apps.map(({ Glyph, active, run, badge }, i) => (
          <AppTile key={i} $active={active} $run={run}>
            <Glyph />
            {badge && <AccountBadge>{badge}</AccountBadge>}
          </AppTile>
        ))}
        <Tray>
          <Slot $w={48}><Chevron /></Slot>
          <Slot $w={32}><CloudGlyph /></Slot>
          <Slot $w={64}>
            <Lines $align="center" $top={-2}>
              <Label $track={-0.3} $color="#1b1b1b">ENG</Label>
              <Label $track={-0.2} $color="#1b1b1b">IN</Label>
            </Lines>
          </Slot>
          <Slot $w={30}><Wifi /></Slot>
          <Slot $w={30}><Volume /></Slot>
          <Slot $w={30}><Battery /></Slot>
          <Slot $w={93} $justify="flex-end">
            <Lines $align="flex-end" $top={-3}>
              <Label $track={-0.2} $color="#1b1b1b">21:42</Label>
              <Label $color="#1b1b1b">05-04-2023</Label>
            </Lines>
          </Slot>
          <Count>7</Count>
        </Tray>
      </Taskbar>
    </Window>
  );
}
